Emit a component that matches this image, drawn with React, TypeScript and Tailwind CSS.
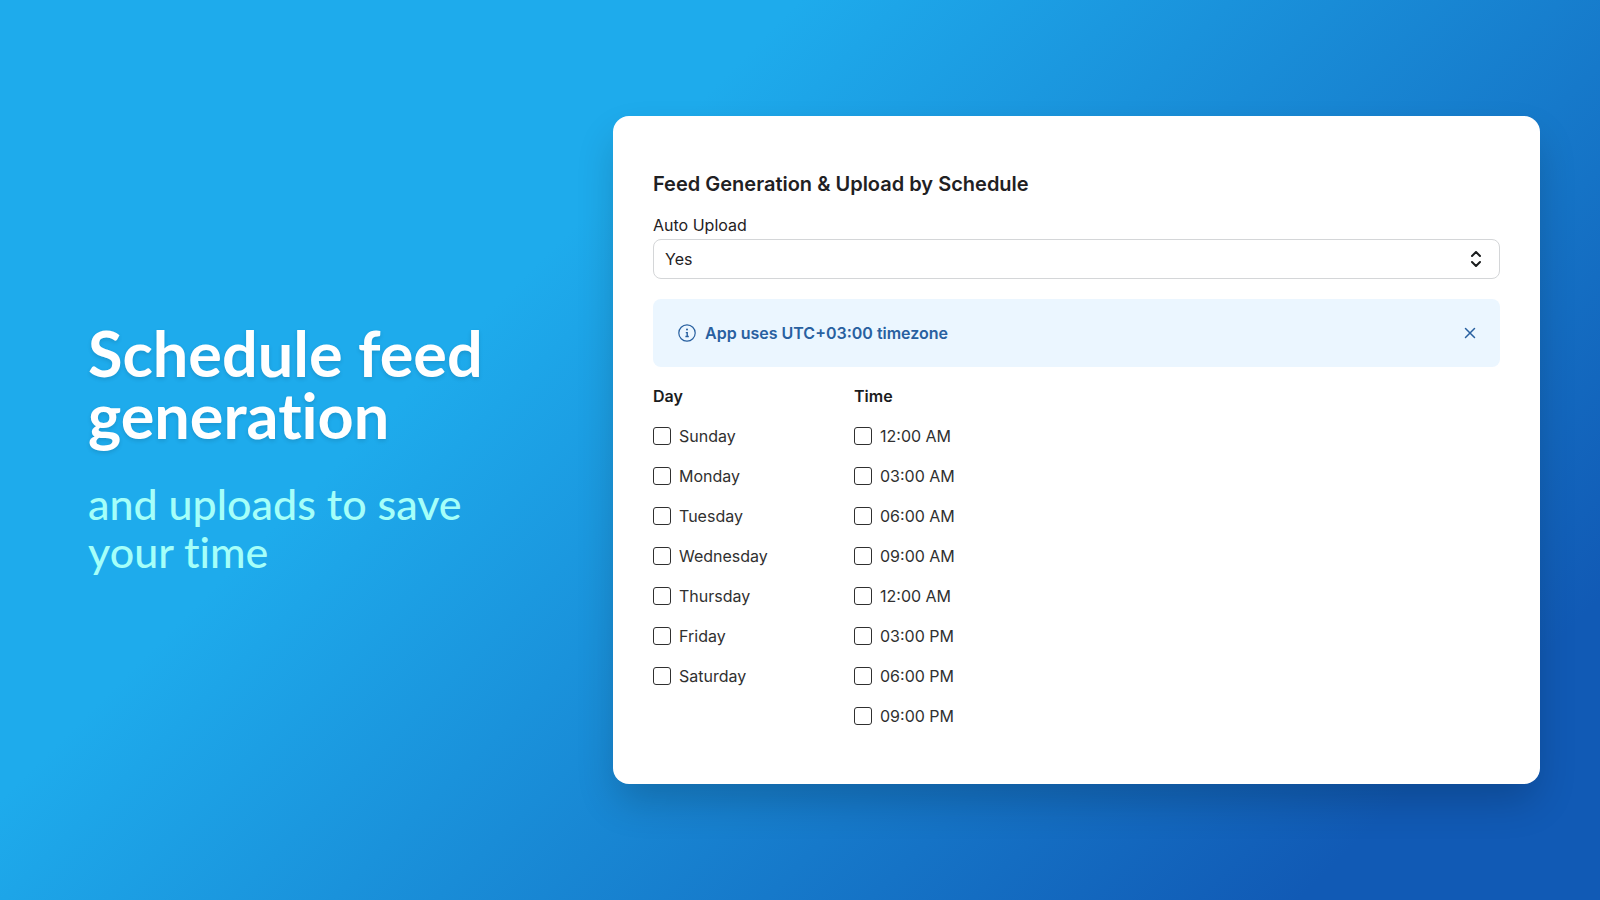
import { useState } from "react";

const days = [
  "Sunday",
  "Monday",
  "Tuesday",
  "Wednesday",
  "Thursday",
  "Friday",
  "Saturday",
];

const times = [
  "12:00 AM",
  "03:00 AM",
  "06:00 AM",
  "09:00 AM",
  "12:00 AM",
  "03:00 PM",
  "06:00 PM",
  "09:00 PM",
];

const CheckList = ({ title, items }: { title: string; items: string[] }) => {
  return (
    <fieldset>
      <legend className="font-semibold leading-6 text-[#1a1c1d]">{title}</legend>
      <div className="mt-4 space-y-4">
        {items.map((item, index) => (
          <label
            key={index}
            className="flex h-6 items-center gap-2 text-[#303030]"
          >
            <input
              type="checkbox"
              className="size-[18px] shrink-0 appearance-none rounded-[3px] border border-[#303030] bg-white checked:bg-[#303030]"
            />
            {item}
          </label>
        ))}
      </div>
    </fieldset>
  );
};

const App = () => {
  const [showBanner, setShowBanner] = useState(true);

  return (
    <main className="flex min-h-screen items-center bg-[linear-gradient(135deg,#1eabec_32%,#115ab5_88%)] pr-15 pl-22">
      <section className="w-[525px] shrink-0 pb-0.5 font-['Lato_Medium','Lato',sans-serif] [font-variant-ligatures:none]">
        <h1 className="font-['Lato',sans-serif] text-[63px] leading-[62px] font-bold text-white text-shadow-[0_2px_4px_rgba(0,0,0,0.12)]">
          Schedule feed
          <br />
          generation
        </h1>
        <p className="mt-[34px] text-[43px] leading-12 font-medium text-[#a5fff9]">
          and uploads to save
          <br />
          your time
        </p>
      </section>

      <section className="grow rounded-2xl bg-white px-10 pt-14 pb-14 font-['Inter',sans-serif] text-base text-[#1f2123] shadow-[0_20px_40px_-4px_rgba(0,0,0,0.2)]">
        <h2 className="text-xl leading-6 font-semibold">
          Feed Generation &amp; Upload by Schedule
        </h2>

        <label htmlFor="auto-upload" className="mt-[15px] block leading-7">
          Auto Upload
        </label>
        <div className="relative">
          <select
            id="auto-upload"
            className="h-10 w-full appearance-none rounded-lg border border-[#d4d6d8] bg-white px-[11px]"
          >
            <option>Yes</option>
            <option>No</option>
          </select>
          <svg
            className="pointer-events-none absolute top-3 right-[18px] h-4 w-3"
            viewBox="0 0 12 16"
            fill="none"
            stroke="#1a1c1d"
            strokeWidth="2"
            strokeLinecap="round"
            strokeLinejoin="round"
          >
            <path d="M2 5l4-4 4 4M2 11l4 4 4-4" />
          </svg>
        </div>

        {showBanner && (
          <div className="mt-5 flex h-17 items-center rounded-lg bg-[#ebf6ff] px-6 text-[#2860a0]">
            <svg
              className="size-5"
              viewBox="0 0 20 20"
              fill="none"
              stroke="currentColor"
            >
              <circle cx="10" cy="10" r="8.2" strokeWidth="1.2" />
              <path d="M8.8 9.6h1.4v3.9M8.4 13.5h3.4" strokeWidth="1.4" />
              <circle cx="10" cy="6.6" r="1" fill="currentColor" stroke="none" />
            </svg>
            <p className="ml-2 font-semibold">App uses UTC+03:00 timezone</p>
            <button
              type="button"
              aria-label="Dismiss"
              className="ml-auto"
              onClick={() => setShowBanner(false)}
            >
              <svg
                className="size-3"
                viewBox="0 0 12 12"
                stroke="currentColor"
                strokeWidth="1.5"
                strokeLinecap="round"
              >
                <path d="M1.5 1.5l9 9M10.5 1.5l-9 9" />
              </svg>
            </button>
          </div>
        )}

        <div className="mt-[17px] grid grid-cols-[201px_1fr]">
          <CheckList title="Day" items={days} />
          <CheckList title="Time" items={times} />
        </div>
      </section>
    </main>
  );
};

export default App;
